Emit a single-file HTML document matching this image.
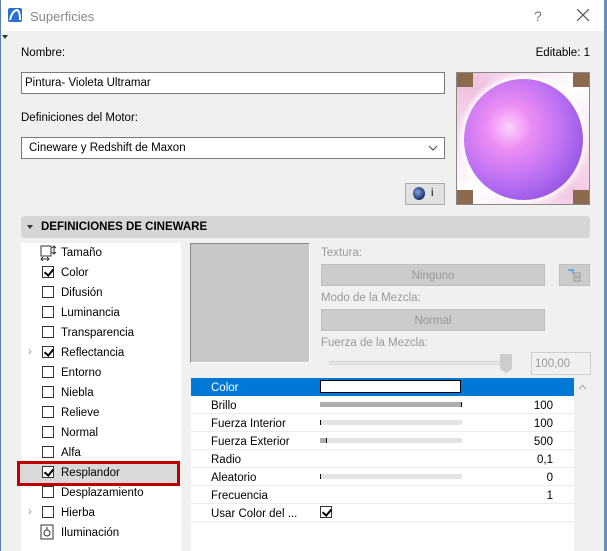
<!DOCTYPE html>
<html><head><meta charset="utf-8"><style>
*{box-sizing:border-box;margin:0;padding:0}
body{width:607px;height:551px;overflow:hidden;background:#f0f0f0;font-family:"Liberation Sans",sans-serif;font-size:11.5px;color:#000;position:relative}
.a{position:absolute;white-space:nowrap}
.cb{position:absolute;width:12px;height:12px;border:1px solid #333;background:#fff}
.ck::after{content:"";position:absolute;left:3px;top:0px;width:4px;height:7px;border:solid #000;border-width:0 2px 2px 0;transform:rotate(40deg)}
.lt{position:absolute;left:61px}
.row{position:absolute;left:191px;width:383px;height:18px;border-bottom:1px solid #ececec}
.row .l{position:absolute;left:20px;top:4px}
.row .v{position:absolute;right:21px;top:4px}
.bar{position:absolute;left:129px;top:6px;width:142px;height:5px;background:#e3e3e3}
.g{color:#999}
</style></head><body>
<div class="a" style="left:0;top:0;width:607px;height:31px;background:#fff"></div>
<div class="a" style="left:0;top:0;width:1px;height:551px;background:#5a7fa8"></div>
<div class="a" style="left:604px;top:0;width:3px;height:551px;background:#6a8db5"></div>
<svg class="a" style="left:8px;top:8px" width="14" height="14"><rect width="14" height="14" rx="2" fill="#2a6fd6"/><path d="M2 12 Q4 3 9 2 Q12 3 12 12" stroke="#fff" stroke-width="2" fill="none"/></svg>
<div class="a" style="left:30px;top:9px;font-size:13px;color:#888">Superficies</div>
<div class="a" style="left:534px;top:8px;font-size:14px;color:#777">?</div>
<svg class="a" style="left:577px;top:9px" width="12" height="12"><path d="M0 0L12 12M12 0L0 12" stroke="#555" stroke-width="1.2"/></svg>
<div class="a" style="left:2px;top:35px;width:0;height:0;border:3px solid transparent;border-top:4px solid #333"></div>
<div class="a" style="left:21px;top:47px">Nombre:</div>
<div class="a" style="right:17px;top:47px">Editable: 1</div>
<div class="a" style="left:21px;top:72px;width:424px;height:22px;background:#fff;border:1px solid #7a7a7a;padding:4px 3px">Pintura- Violeta Ultramar</div>
<div class="a" style="left:21px;top:112px">Definiciones del Motor:</div>
<div class="a" style="left:21px;top:137px;width:424px;height:22px;background:#fff;border:1px solid #7a7a7a;padding:4px 7px">Cineware y Redshift de Maxon</div>
<svg class="a" style="left:428px;top:145px" width="10" height="7"><path d="M1 1L5 5L9 1" stroke="#444" fill="none"/></svg>
<div class="a" style="left:405px;top:183px;width:40px;height:22px;background:#e1e1e1;border:1px solid #adadad"></div>
<div class="a" style="left:413px;top:187px;width:12px;height:13px;border-radius:50%;background:radial-gradient(circle at 40% 40%,#7aa3e0,#1a2f6a 70%)"></div>
<div class="a" style="left:431px;top:187px;font-size:11px">i</div>
<div class="a" style="left:456px;top:72px;width:134px;height:133px;border:1px solid #888;overflow:hidden;background:conic-gradient(from 45deg at 50% 50%,#fff,#f4c8e4,#fff,#f0c0e0,#fff);">
 <div style="position:absolute;left:0;top:0;width:16px;height:14px;background:#8c6a4e"></div>
 <div style="position:absolute;right:0;top:0;width:16px;height:14px;background:#8c6a4e"></div>
 <div style="position:absolute;left:0;bottom:0;width:16px;height:14px;background:#8c6a4e"></div>
 <div style="position:absolute;right:0;bottom:0;width:16px;height:14px;background:#8c6a4e"></div>
 <div style="position:absolute;left:7px;top:6px;width:119px;height:121px;border-radius:50%;background:radial-gradient(circle at 38% 40%,#fbd0fb 0%,#ec8cf4 22%,#b86ef2 55%,#9a58e6 75%,#6a3a98 100%);box-shadow:0 0 6px 3px #fff"></div>
</div>
<div class="a" style="left:21px;top:216px;width:569px;height:22px;background:#d6d6d6;border-radius:3px"></div>
<div class="a" style="left:27px;top:225px;border:3px solid transparent;border-top:4px solid #333"></div>
<div class="a" style="left:41px;top:221px;font-weight:bold;font-size:11.5px">DEFINICIONES DE CINEWARE</div>
<div class="a" style="left:21px;top:243px;width:160px;height:308px;background:#fff"></div>
<svg class="a" style="left:40px;top:245px" width="16" height="16"><rect x="1" y="1" width="10" height="10" fill="none" stroke="#333"/><path d="M14 1v8M12 3l2-2 2 2M12 7l2 2 2-2M1 14h8M3 12l-2 2 2 2M7 12l2 2-2 2" stroke="#333" fill="none"/></svg>
<div class="lt a" style="top:247px">Tamaño</div>
<div class="cb ck" style="left:42px;top:266px"></div><div class="lt a" style="top:267px">Color</div>
<div class="cb" style="left:42px;top:286px"></div><div class="lt a" style="top:287px">Difusión</div>
<div class="cb" style="left:42px;top:306px"></div><div class="lt a" style="top:307px">Luminancia</div>
<div class="cb" style="left:42px;top:326px"></div><div class="lt a" style="top:327px">Transparencia</div>
<div class="a" style="left:28px;top:346px;color:#999">›</div>
<div class="cb ck" style="left:42px;top:346px"></div><div class="lt a" style="top:347px">Reflectancia</div>
<div class="cb" style="left:42px;top:366px"></div><div class="lt a" style="top:367px">Entorno</div>
<div class="cb" style="left:42px;top:386px"></div><div class="lt a" style="top:387px">Niebla</div>
<div class="cb" style="left:42px;top:406px"></div><div class="lt a" style="top:407px">Relieve</div>
<div class="cb" style="left:42px;top:426px"></div><div class="lt a" style="top:427px">Normal</div>
<div class="cb" style="left:42px;top:446px"></div><div class="lt a" style="top:447px">Alfa</div>
<div class="a" style="left:17px;top:461px;width:163px;height:25px;background:#d9d9d9;border:3px solid #c00000"></div>
<div class="cb ck" style="left:42px;top:466px"></div><div class="lt a" style="top:467px">Resplandor</div>
<div class="cb" style="left:42px;top:486px"></div><div class="lt a" style="top:487px">Desplazamiento</div>
<div class="a" style="left:28px;top:506px;color:#999">›</div>
<div class="cb" style="left:42px;top:506px"></div><div class="lt a" style="top:507px">Hierba</div>
<svg class="a" style="left:40px;top:524px" width="14" height="16"><rect x="1" y="1" width="12" height="14" fill="none" stroke="#333"/><circle cx="7" cy="9" r="3" fill="none" stroke="#333"/><path d="M7 3v3" stroke="#333"/></svg>
<div class="lt a" style="top:527px">Iluminación</div>
<div class="a" style="left:190px;top:243px;width:120px;height:120px;background:#c8c8c8;border:1px solid #fff;border-left-color:#888;border-top-color:#888"></div>
<div class="a g" style="left:321px;top:247px">Textura:</div>
<div class="a g" style="left:321px;top:264px;width:224px;height:22px;background:#cccccc;border:1px solid #bfbfbf;text-align:center;padding-top:5px">Ninguno</div>
<div class="a" style="left:559px;top:264px;width:31px;height:22px;background:#cccccc;border:1px solid #bfbfbf"></div>
<svg class="a" style="left:566px;top:267px" width="16" height="16"><path d="M2 3h5v4" stroke="#6aa8e8" stroke-width="2" fill="none"/><rect x="8" y="6" width="6" height="8" fill="none" stroke="#999"/><path d="M9 9h4M9 11h4" stroke="#999"/></svg>
<div class="a g" style="left:321px;top:292px">Modo de la Mezcla:</div>
<div class="a g" style="left:321px;top:309px;width:224px;height:22px;background:#cccccc;border:1px solid #bfbfbf;text-align:center;padding-top:5px">Normal</div>
<div class="a g" style="left:321px;top:337px">Fuerza de la Mezcla:</div>
<div class="a" style="left:329px;top:361px;width:176px;height:4px;background:#e6e6e6;border:1px solid #d6d6d6"></div>
<div class="a" style="left:500px;top:354px;width:12px;height:15px;background:#cdcdcd"></div>
<div class="a" style="left:500px;top:369px;border:6px solid transparent;border-top:4px solid #cdcdcd;border-bottom:0"></div>
<div class="a g" style="left:531px;top:352px;width:60px;height:23px;border:1px solid #cfcfcf;padding:5px 3px">100,00</div>
<div class="a" style="left:191px;top:378px;width:399px;height:173px;background:#fff"></div>
<div class="a" style="left:574px;top:378px;width:16px;height:173px;background:#f0f0f0"></div>
<svg class="a" style="left:578px;top:384px" width="9" height="6"><path d="M1 5L4.5 1.5L8 5" stroke="#bbb" fill="none" stroke-width="1.5"/></svg>
<div class="row" style="top:378px;background:#0078d7;border:0"><span class="l" style="color:#fff">Color</span><div style="position:absolute;left:129px;top:2px;width:141px;height:13px;background:#fff;border:1px solid #000"></div></div>
<div class="row" style="top:396px"><span class="l">Brillo</span><div class="bar" style="background:#adadad;border-right:1px solid #000"></div><span class="v">100</span></div>
<div class="row" style="top:414px"><span class="l">Fuerza Interior</span><div class="bar" style="border-left:1px solid #000"></div><span class="v">100</span></div>
<div class="row" style="top:432px"><span class="l">Fuerza Exterior</span><div class="bar"><div style="width:7px;height:5px;background:#adadad;border-right:1px solid #000"></div></div><span class="v">500</span></div>
<div class="row" style="top:450px"><span class="l">Radio</span><span class="v">0,1</span></div>
<div class="row" style="top:468px"><span class="l">Aleatorio</span><div class="bar" style="border-left:1px solid #000"></div><span class="v">0</span></div>
<div class="row" style="top:486px"><span class="l">Frecuencia</span><span class="v">1</span></div>
<div class="row" style="top:504px"><span class="l">Usar Color del ...</span><div class="cb ck" style="left:129px;top:2px"></div></div>
</body></html>
